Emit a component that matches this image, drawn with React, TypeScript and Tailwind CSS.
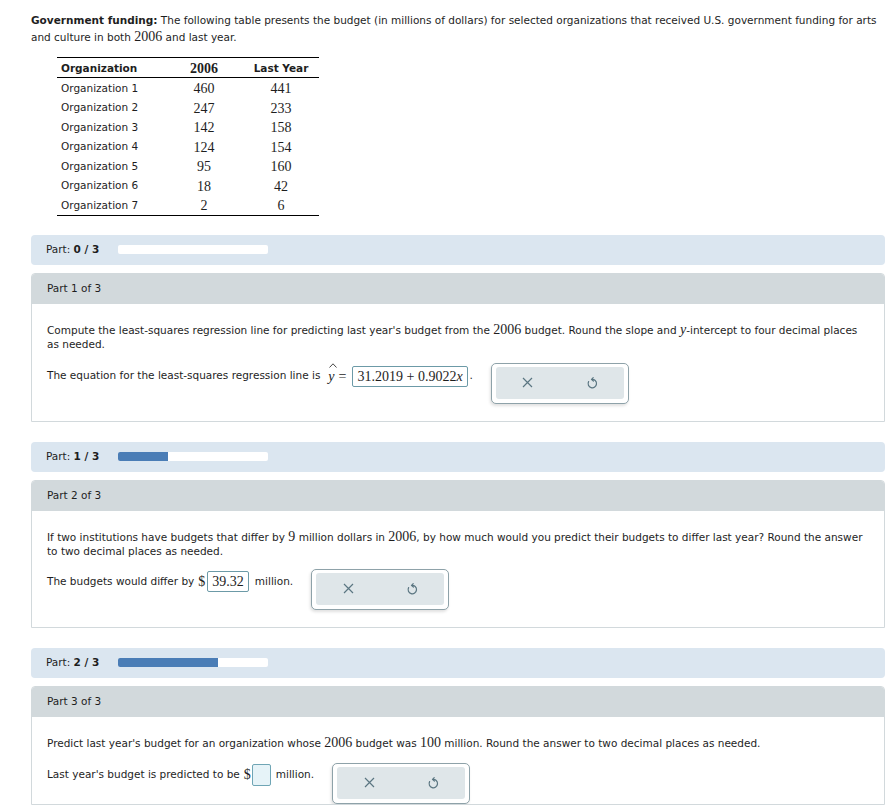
import React from "react";

const rows: [string, number, number][] = [
  ["Organization 1", 460, 441],
  ["Organization 2", 247, 233],
  ["Organization 3", 142, 158],
  ["Organization 4", 124, 154],
  ["Organization 5", 95, 160],
  ["Organization 6", 18, 42],
  ["Organization 7", 2, 6],
];

function Num({ children }: { children: React.ReactNode }) {
  return <span className="font-['Liberation_Serif','Times_New_Roman',serif] text-[14px] leading-[14px]">{children}</span>;
}

function PartBar({ done }: { done: number }) {
  return (
    <div className="flex h-[30px] items-center rounded-[4px] bg-[#dbe6f0] pl-[15px]">
      <span className="w-[72px]">
        Part: <b>{done} / 3</b>
      </span>
      <div className="h-[9px] w-[150px] overflow-hidden rounded-[2px] bg-white">
        <div className="h-full bg-[#4a7db6]" style={{ width: `${(done / 3) * 100}%` }} />
      </div>
    </div>
  );
}

function PartBox({ n, last, children }: { n: number; last?: boolean; children: React.ReactNode }) {
  return (
    <div className="mt-[8px] overflow-hidden rounded-t-[4px] border border-[#d2d9dc]">
      <div className="flex h-[30px] items-center bg-[#d2d9dc] pl-[15px]">Part {n} of 3</div>
      <div className={last ? "bg-white px-[15px] pt-[19px]" : "bg-white px-[15px] pt-[19px] pb-[17px]"}>
        {children}
      </div>
    </div>
  );
}

function Controls() {
  return (
    <div className="ml-[18px] h-[41px] w-[138px] shrink-0 rounded-[5px] border border-[#8ea2a9] bg-white px-[4px] pt-[3px] pb-[4px] shadow-[-1px_2px_3px_rgba(0,0,0,0.12)]">
      <div className="flex h-full rounded-[3px] bg-[#dfe6e9]">
        <div className="flex flex-1 items-center justify-center">
          <svg width="11" height="11" viewBox="0 0 11 11" fill="none" stroke="#5b7682" strokeWidth="1.2">
            <path d="M1 1 L10 10 M10 1 L1 10" />
          </svg>
        </div>
        <div className="flex flex-1 items-center justify-center">
          <svg width="12" height="13" viewBox="0 0 12 13" fill="none" stroke="#5b7682" strokeWidth="1.2" strokeLinecap="round">
            <path d="M2.6 5.6 A4.2 4.2 0 1 0 5.8 3.4" />
            <path d="M7.2 1.6 L5.6 3.4 L7.4 5" />
          </svg>
        </div>
      </div>
    </div>
  );
}

function AnswerBox({ children, empty }: { children?: React.ReactNode; empty?: boolean }) {
  return (
    <span
      className={
        empty
          ? "mx-[1px] inline-block h-[22px] w-[19px] rounded-[2px] border border-[#6fa5b5] bg-[#e6f3f8]"
          : "mx-[2px] inline-flex h-[21px] items-center rounded-[2px] border border-[#6c9aa7] px-[4px] font-['Liberation_Serif','Times_New_Roman',serif] text-[14px]"
      }
    >
      {children}
    </span>
  );
}

const serif = "font-['Liberation_Serif','Times_New_Roman',serif] text-[14px]";

export default function App() {
  return (
    <div className="w-[894px] bg-white pt-[12px] pl-[31px] pr-[9px] font-['DejaVu_Sans',Verdana,sans-serif] text-[10.5px] text-[#1e1e1e]">
      <p className="leading-[17px]">
        <b>Government funding:</b> The following table presents the budget (in millions of dollars) for selected
        organizations that received U.S. government funding for arts and culture in both <Num>2006</Num> and last
        year.
      </p>

      <div className="mt-[11px] ml-[26px] w-[262px] border-y border-black">
        <div className="grid h-[20px] grid-cols-[118px_58px_86px] items-center border-b border-black font-bold">
          <span className="pl-[4px]">Organization</span>
          <span className="text-center font-['Liberation_Serif','Times_New_Roman',serif] text-[14px]">2006</span>
          <span className="pl-[10px] text-center">Last Year</span>
        </div>
        {rows.map(([name, a, b]) => (
          <div key={name} className="grid h-[19.5px] grid-cols-[118px_58px_86px] items-center">
            <span className="pl-[4px]">{name}</span>
            <span className={"text-center " + serif}>{a}</span>
            <span className={"pl-[10px] text-center " + serif}>{b}</span>
          </div>
        ))}
      </div>

      <div className="mt-[19px]">
        <PartBar done={0} />
        <PartBox n={1}>
          <p className="leading-[14px]">
            Compute the least-squares regression line for predicting last year's budget from the <Num>2006</Num>{" "}
            budget. Round the slope and <Num><i>y</i></Num>-intercept to four decimal places as needed.
          </p>
          <div className="mt-[12px] flex items-start">
            <div className="mt-[3px] flex h-[21px] items-center">
              <span>The equation for the least-squares regression line is</span>
              <span className="relative ml-[8px] font-['Liberation_Serif','Times_New_Roman',serif] text-[14px] italic">
                y
                <svg className="absolute -top-[3px] left-[1px]" width="8" height="5" viewBox="0 0 8 5" fill="none" stroke="#333" strokeWidth="0.9">
                  <path d="M0.5 4.5 L4 0.8 L7.5 4.5" />
                </svg>
              </span>
              <span className="mx-[4px] font-['Liberation_Serif','Times_New_Roman',serif] text-[14px]">=</span>
              <AnswerBox>
                31.2019 + 0.9022<i>x</i>
              </AnswerBox>
              <span>.</span>
            </div>
            <Controls />
          </div>
        </PartBox>
      </div>

      <div className="mt-[20px]">
        <PartBar done={1} />
        <PartBox n={2}>
          <p className="leading-[14px]">
            If two institutions have budgets that differ by <Num>9</Num> million dollars in <Num>2006</Num>, by how
            much would you predict their budgets to differ last year? Round the answer to two decimal places as
            needed.
          </p>
          <div className="mt-[11px] flex items-start">
            <div className="mt-[2px] flex h-[22px] items-center">
              <span>The budgets would differ by</span>
              <span className={"ml-[4px] " + serif}>$</span>
              <AnswerBox>39.32</AnswerBox>
              <span className="ml-[4px]">million.</span>
            </div>
            <Controls />
          </div>
        </PartBox>
      </div>

      <div className="mt-[20px]">
        <PartBar done={2} />
        <PartBox n={3} last>
          <p className="leading-[14px]">
            Predict last year's budget for an organization whose <Num>2006</Num> budget was <Num>100</Num> million.
            Round the answer to two decimal places as needed.
          </p>
          <div className="mt-[13px] flex items-start">
            <div className="mt-[1px] flex h-[22px] items-center">
              <span>Last year's budget is predicted to be</span>
              <span className={"ml-[4px] " + serif}>$</span>
              <AnswerBox empty />
              <span className="ml-[4px]">million.</span>
            </div>
            <Controls />
          </div>
        </PartBox>
      </div>
      <div className="h-[40px]" />
    </div>
  );
}
